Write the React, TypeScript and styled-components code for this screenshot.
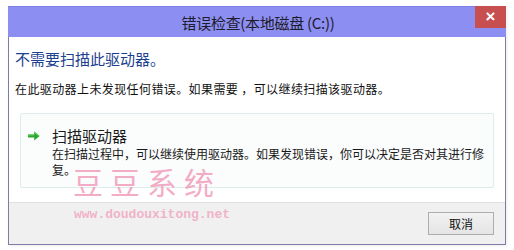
import React from "react";
import styled, { createGlobalStyle } from "styled-components";

const GlobalStyle = createGlobalStyle`
  html, body {
    margin: 0;
    padding: 0;
    background: #ffffff;
  }
  body {
    font-family: "Noto Sans CJK SC", "Liberation Sans", sans-serif;
  }
`;

const App: React.FC = () => {
  return (
    <>
      <GlobalStyle />
      <Page>
        <Window>
          <TitleBar>
            <Title>错误检查(本地磁盘 (C:))</Title>
            <CloseButton>×</CloseButton>
          </TitleBar>
          <Body>
            <Heading>不需要扫描此驱动器。</Heading>
            <Message>在此驱动器上未发现任何错误。如果需要 ，可以继续扫描该驱动器。</Message>
            <Card>
              <Arrow viewBox="0 0 12 10">
                <path d="M0 3.6 H6.2 V0.6 L11.6 5 L6.2 9.4 V6.4 H0 Z" fill="#2ea52e" />
                <path d="M0 3.6 H6.2 V0.6 L11.6 5 L10.4 5 L6.2 2 V4.6 H0 Z" fill="#5fd35f" />
              </Arrow>
              <CardText>
                <CardTitle>扫描驱动器</CardTitle>
                <CardDesc>
                  在扫描过程中，可以继续使用驱动器。如果发现错误，你可以决定是否对其进行修复。
                </CardDesc>
              </CardText>
            </Card>
          </Body>
          <Footer>
            <Button>取消</Button>
          </Footer>
          <Watermark>
            <WatermarkTitle>豆豆系统</WatermarkTitle>
            <WatermarkUrl>www.doudouxitong.net</WatermarkUrl>
          </Watermark>
        </Window>
      </Page>
    </>
  );
};

export default App;

const Page = styled.div`
  width: 514px;
  height: 250px;
  padding: 6px 0 0 8px;
  box-sizing: border-box;
`;

const Window = styled.div`
  position: relative;
  width: 498px;
  height: 239px;
  box-sizing: border-box;
  border: 1px solid #7c7ca6;
  border-top: none;
  background: #ffffff;
  display: flex;
  flex-direction: column;
  box-shadow: 1px 1px 3px rgba(0, 0, 0, 0.08);
`;

const TitleBar = styled.div`
  position: relative;
  height: 30px;
  margin: 0 -1px;
  background: #8d8ef2;
  border-top: 1px solid #7d7ee6;
  display: flex;
  align-items: center;
  justify-content: center;
  flex-shrink: 0;
`;

const Title = styled.div`
  font-size: 15px;
  color: #1c1c2a;
  letter-spacing: -0.3px;
  margin-left: 2px;
`;

const CloseButton = styled.div`
  position: absolute;
  right: 0;
  top: -1px;
  width: 31px;
  height: 22px;
  background: #c74f50;
  color: #ffffff;
  font-family: "Liberation Sans", sans-serif;
  font-size: 17px;
  font-weight: bold;
  line-height: 22px;
  text-align: center;
`;

const Body = styled.div`
  flex: 1;
  padding: 12px 11px 0 6px;
  display: flex;
  flex-direction: column;
`;

const Heading = styled.div`
  font-size: 15px;
  line-height: 20px;
  color: #1d4190;
`;

const Message = styled.div`
  margin-top: 12px;
  font-size: 12px;
  line-height: 16px;
  color: #111111;
  letter-spacing: 0.4px;
`;

const Card = styled.div`
  margin: 16px 0 0 5px;
  height: 75px;
  box-sizing: border-box;
  border: 1px solid #dcecec;
  border-radius: 2px;
  background: #fbfdfd;
  display: flex;
  align-items: flex-start;
  padding: 12px 2px 0 7px;
`;

const Arrow = styled.svg`
  width: 12px;
  height: 10px;
  margin-top: 5px;
  flex-shrink: 0;
`;

const CardText = styled.div`
  margin-left: 12px;
  display: flex;
  flex-direction: column;
`;

const CardTitle = styled.div`
  font-size: 15px;
  line-height: 19px;
  color: #1a1a1a;
`;

const CardDesc = styled.div`
  margin-top: 1px;
  width: 434px;
  font-size: 12px;
  line-height: 16px;
  color: #1a1a1a;
`;

const Footer = styled.div`
  height: 42px;
  box-sizing: border-box;
  background: #f0f0f0;
  border-top: 1px solid #dfdfdf;
  display: flex;
  justify-content: flex-end;
  align-items: flex-start;
  padding: 9px 11px 0 0;
  flex-shrink: 0;
`;

const Button = styled.button`
  width: 66px;
  height: 23px;
  border: 1px solid #adadad;
  background: linear-gradient(#f2f2f2, #e4e4e4);
  font-family: "Noto Sans CJK SC", sans-serif;
  font-size: 12px;
  color: #111111;
  padding: 0;
`;

const Watermark = styled.div`
  position: absolute;
  left: 64px;
  top: 158px;
  display: flex;
  flex-direction: column;
  align-items: flex-start;
  pointer-events: none;
`;

const WatermarkTitle = styled.div`
  font-family: "Noto Sans CJK SC", sans-serif;
  font-size: 30px;
  font-weight: 400;
  line-height: 34px;
  letter-spacing: 7px;
  color: rgba(242, 150, 182, 0.8);
`;

const WatermarkUrl = styled.div`
  margin-top: 10px;
  margin-left: 1px;
  font-family: "Liberation Mono", monospace;
  font-size: 13px;
  font-weight: bold;
  line-height: 14px;
  color: rgba(240, 150, 180, 0.7);
`;
